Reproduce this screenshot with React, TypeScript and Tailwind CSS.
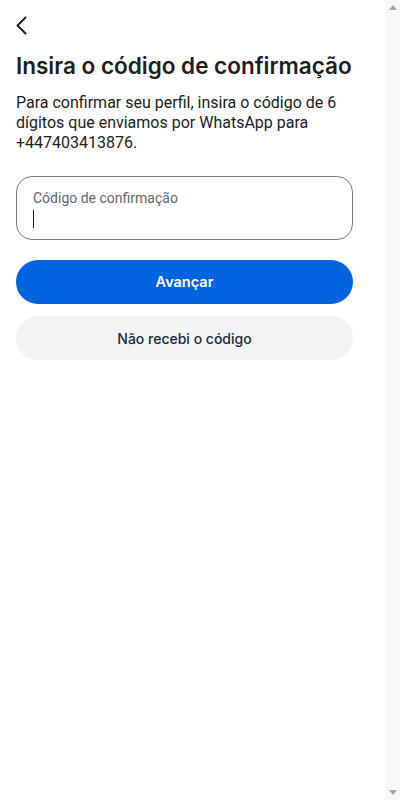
import { useState } from 'react'

export default function App() {
  const [code, setCode] = useState('')

  return (
    <div
      className="flex h-screen bg-white text-[#1c2b33]"
      style={{ fontFamily: 'Roboto, "Noto Sans", sans-serif' }}
    >
      <div className="flex-1 overflow-hidden px-4 pt-[14px]">
        {/* Back */}
        <button className="-ml-[4px] flex h-6 w-6 items-center justify-start" aria-label="Voltar">
          <svg width="24" height="24" viewBox="0 0 24 24" fill="none">
            <path d="M13.5 3.5 L5.5 11.5 L13.5 19.5" stroke="#1c1e21" strokeWidth="2" strokeLinecap="round" strokeLinejoin="round" />
          </svg>
        </button>

        <div className="w-[337px]">
          <h1
            className="mt-[14px] text-[22.5px] font-semibold leading-[28px] text-[#1c1e21]"
            style={{ fontFamily: 'Inter, Roboto, sans-serif' }}
          >
            Insira o código de confirmação
          </h1>
          <p className="mt-[13px] text-[16px] leading-[20px] text-[#1c1e21]">
            Para confirmar seu perfil, insira o código de 6 dígitos que enviamos por WhatsApp para +447403413876.
          </p>

          {/* Input */}
          <label className="mt-[23px] block h-[64px] rounded-[16px] border border-[#777a7e] px-4 pt-[12px]">
            <span className="block text-[14px] leading-[18px] text-[#606770]">Código de confirmação</span>
            <div className="relative mt-[1px] h-[22px]">
              <input
                value={code}
                onChange={(e) => setCode(e.target.value)}
                className="h-full w-full bg-transparent text-[16px] outline-none"
                inputMode="numeric"
              />
              {code === '' && (
                <span className="pointer-events-none absolute left-0 top-[2px] h-[18px] w-[1px] bg-[#1c1e21]" />
              )}
            </div>
          </label>

          {/* Buttons */}
          <div
            className="mt-[20px] flex flex-col gap-[12px]"
            style={{ fontFamily: 'Inter, Roboto, sans-serif' }}
          >
            <button className="h-[44px] w-full rounded-full bg-[#0064e0] text-[14.5px] font-semibold text-white">
              Avançar
            </button>
            <button className="h-[44px] w-full rounded-full bg-[#f1f3f5] text-[14px] font-medium text-[#1c2b33]">
              Não recebi o código
            </button>
          </div>
        </div>
      </div>

      {/* Scrollbar track */}
      <div className="flex w-[15px] shrink-0 flex-col items-center justify-between bg-[#f8f8f8] py-[5px]">
        <svg width="8" height="5" viewBox="0 0 8 5">
          <path d="M4 0 L8 5 L0 5 Z" fill="#a3a3a3" />
        </svg>
        <svg width="8" height="5" viewBox="0 0 8 5">
          <path d="M0 0 L8 0 L4 5 Z" fill="#a3a3a3" />
        </svg>
      </div>
    </div>
  )
}
